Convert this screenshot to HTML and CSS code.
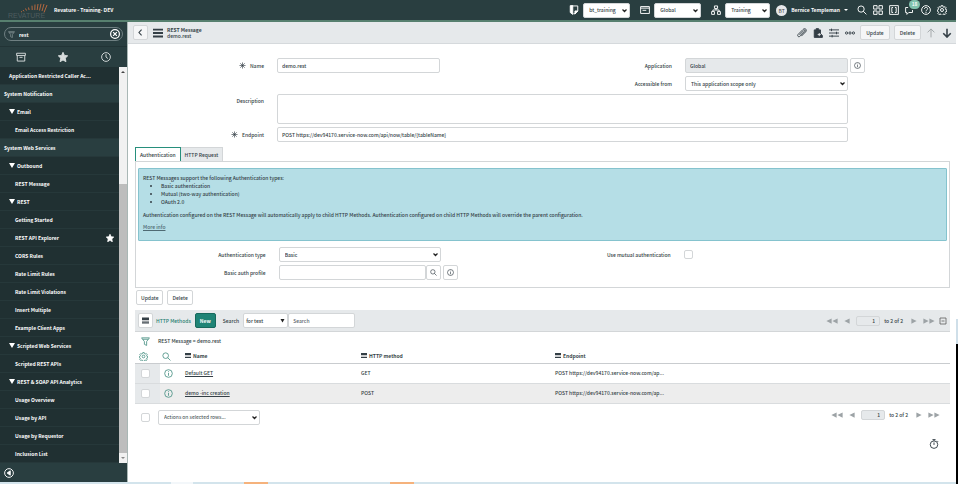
FILE: index.html
```
<!DOCTYPE html>
<html lang="en">
<head>
    <meta charset="UTF-8">
    <meta name="viewport" content="width=device-width, initial-scale=1.0">
    <title>demo.rest | REST Message</title>
    <link rel="stylesheet" href="styles.css">
</head>
<body>

    <!-- Icon set -->
    <svg class="sprite" aria-hidden="true">
        <symbol id="i-search" viewBox="0 0 16 16"><circle cx="6.5" cy="6.5" r="5"/><path d="M10 10l5 5"/></symbol>
        <symbol id="i-info" viewBox="0 0 16 16"><circle cx="8" cy="8" r="6.8"/><path d="M8 7v5M8 4v1.6"/></symbol>
        <symbol id="i-gear" viewBox="0 0 16 16"><circle cx="8" cy="8" r="2.4"/><path d="M6.700 1h2.600l.4 2 1.400.7 1.800-1.100 1.700 1.800-1.100 1.800.5 1.300 2 .5v2l-2 .5-.6 1.400 1.100 1.700-1.700 1.700-1.800-1-1.300.5-.4 2H6.700l-.4-2-1.400-.5-1.800 1-1.700-1.700 1.100-1.700L2 10.500l-1.500-.5V8l1.500-.5.6-1.300-1.100-1.800 1.700-1.800L5 3.700 6.300 3z"/></symbol>
        <symbol id="i-funnel" viewBox="0 0 16 16"><path d="M1 1.500h14L10 8v7l-4-2V8zM3 4h10"/></symbol>
        <symbol id="i-menu" viewBox="0 0 16 16"><path d="M0 2.500h16M0 8h16M0 13.500h16"/></symbol>
        <symbol id="i-column" viewBox="0 0 18 15"><path d="M0 0h18v6H0zM0 8h18v2H0zM0 12h18v3H0z"/></symbol>
        <symbol id="i-star" viewBox="0 0 16 16"><path d="M8 .5l2.300 5 5.200.6-3.900 3.700 1.100 5.700L8 12.700l-4.700 2.800 1.100-5.700L.5 6.100l5.200-.6z"/></symbol>
        <symbol id="i-prev" viewBox="0 0 16 16"><path d="M15 1v14L1 8z"/></symbol>
        <symbol id="i-next" viewBox="0 0 16 16"><path d="M1 1v14l14-7z"/></symbol>
        <symbol id="i-first" viewBox="0 0 32 16"><path d="M15 1v14L1 8zM31 1v14L17 8z"/></symbol>
        <symbol id="i-last" viewBox="0 0 32 16"><path d="M1 1v14l14-7zM17 1v14l14-7z"/></symbol>
    </svg>

    <div class="app">
        <header class="banner">
            <svg class="logo" viewBox="0 0 40 15" role="img" aria-label="Revature">
                <g class="rays">
                    <path d="M13 8.500l1 .5M15 7l1 1.300M17.500 5.500l1 2M20.500 4.500l.6 2.500M24 2.700l.2 4.300M27 1.500l-.2 5.500M30 1l-.8 6M33 .8l-1.500 6.700M36 1l-2 7M39 2l-3 7.500"/>
                </g>
                <text x="0" y="15">REVATURE</text>
            </svg>
            <span class="instance">Revature - Training- DEV</span>
            <div class="pickers">
                <label for="update-set"><svg class="icon" viewBox="0 0 16 16"><path d="M4 1.500h10v8L9.500 14H7"/><path class="solid" d="M2 1h4v14l-4-3zM9.500 9.500H14l-4.500 5z"/></svg></label>
                <select id="update-set"><option>bt_training</option></select>
                <label for="scope"><svg class="icon" viewBox="0 0 16 16"><path d="M1 2.500h14v11H1zM1 5h14M4 8.500h6"/></svg></label>
                <select id="scope"><option>Global</option></select>
                <label for="domain"><svg class="icon" viewBox="0 0 16 16"><path d="M5.500 1.500h5v4h-5zM1 10.500h4.500V15H1zM10.500 10.500H15V15h-4.500zM8 5.500V8M3 10.500V8h10v2.500"/></svg></label>
                <select id="domain"><option>Training</option></select>
            </div>
            <button class="user" type="button"><span class="avatar">BT</span>Bernice Templeman<span class="caret"></span></button>
            <div class="tools">
                <button type="button" aria-label="Search"><svg class="icon"><use href="#i-search"/></svg></button>
                <button type="button" aria-label="Apps"><svg class="icon" viewBox="0 0 16 16"><path d="M1 1h5.500v5.500H1zM9.500 1H15v5.500H9.500zM1 9.500h5.500V15H1zM9.500 9.500H15V15H9.500z"/></svg></button>
                <button type="button" aria-label="Studio"><svg class="icon" viewBox="0 0 16 16"><path d="M1 1h14v14H1zM6.500 4H4.500v8h2M9.500 4h2v8h-2"/></svg></button>
                <button class="chat" type="button" aria-label="Conversations"><svg class="icon" viewBox="0 0 16 16"><path d="M5 4H1v8h2v3l3-3h6V8"/></svg><span class="badge">18</span></button>
                <button type="button" aria-label="Help"><svg class="icon" viewBox="0 0 16 16"><circle cx="8" cy="8" r="7"/><path d="M5.500 6.200C5.500 3 10.500 3 10.500 6c0 1.800-2.500 2-2.500 4M8 11v2"/></svg></button>
                <button type="button" aria-label="Settings"><svg class="icon"><use href="#i-gear"/></svg></button>
            </div>
        </header>

        <div class="body">
            <aside class="sidebar">
                <div class="nav-filter">
                    <svg class="icon"><use href="#i-funnel"/></svg>
                    <input type="text" value="rest" aria-label="Filter navigator">
                    <button type="button" aria-label="Clear"><svg class="icon" viewBox="0 0 16 16"><circle cx="8" cy="8" r="7"/><path d="M5 5l6 6M11 5l-6 6"/></svg></button>
                </div>
                <div class="nav-tabs">
                    <button type="button" aria-label="All applications"><svg class="icon" viewBox="0 0 16 16"><path d="M1 2h14v3.500H1zM2 5.500v9h12v-9M5.500 8.500h5"/></svg></button>
                    <button type="button" aria-label="Favorites"><svg class="icon filled"><use href="#i-star"/></svg></button>
                    <button type="button" aria-label="History"><svg class="icon" viewBox="0 0 16 16"><circle cx="8" cy="8" r="7"/><path d="M8 3.500V8l3 2.500"/></svg></button>
                </div>
                <div class="nav-scroll">
                    <nav class="nav-list">
                        <a class="module top" href="#">Application Restricted Caller Ac...</a>
                        <a class="app-name" href="#">System Notification</a>
                        <a class="group" href="#">Email</a>
                        <a class="module" href="#">Email Access Restriction</a>
                        <a class="app-name" href="#">System Web Services</a>
                        <a class="group" href="#">Outbound</a>
                        <a class="module" href="#">REST Message</a>
                        <a class="group" href="#">REST</a>
                        <a class="module" href="#">Getting Started</a>
                        <a class="module" href="#">REST API Explorer<svg class="icon filled"><use href="#i-star"/></svg></a>
                        <a class="module" href="#">CORS Rules</a>
                        <a class="module" href="#">Rate Limit Rules</a>
                        <a class="module" href="#">Rate Limit Violations</a>
                        <a class="module" href="#">Insert Multiple</a>
                        <a class="module" href="#">Example Client Apps</a>
                        <a class="group" href="#">Scripted Web Services</a>
                        <a class="module" href="#">Scripted REST APIs</a>
                        <a class="group" href="#">REST &amp; SOAP API Analytics</a>
                        <a class="module" href="#">Usage Overview</a>
                        <a class="module" href="#">Usage by API</a>
                        <a class="module" href="#">Usage by Requestor</a>
                        <a class="module" href="#">Inclusion List</a>
                    </nav>
                    <div class="scrollbar"><span class="arrow up"></span><span class="thumb"></span><span class="arrow down"></span></div>
                </div>
                <div class="nav-footer">
                    <button type="button" aria-label="Collapse"><svg class="icon" viewBox="0 0 16 16"><circle cx="8" cy="8" r="7"/><path class="solid" d="M10 4.500v7L5 8z"/></svg></button>
                </div>
            </aside>

            <main class="main">
                <div class="form-header">
                    <button class="btn back" type="button" aria-label="Back"><svg class="icon" viewBox="0 0 16 16"><path d="M10.500 1.500L4.500 8l6 6.500"/></svg></button>
                    <button class="plain" type="button" aria-label="Menu"><svg class="icon menu"><use href="#i-menu"/></svg></button>
                    <h1>REST Message<span>demo.rest</span></h1>
                    <div class="form-actions">
                        <button class="plain" type="button" aria-label="Attachments"><svg class="icon" viewBox="0 0 16 16"><path d="M4 11l7-7c1.500-1.500 3 0 1.500 1.500L5 13c-2.500 2.500-5.500-.5-3-3l7.500-7.500c3.500-3.500 7.500.5 4 4L7 13"/></svg></button>
                        <button class="plain" type="button" aria-label="Add to update set"><svg class="icon" viewBox="0 0 16 16"><path class="solid" d="M2 3h3V1h4v2h3v6l3 3v3H2z"/><path class="cut" d="M10 8v5M7.500 10.500h5"/></svg></button>
                        <button class="plain" type="button" aria-label="Personalize form"><svg class="icon" viewBox="0 0 16 16"><path d="M0 3h16M0 8h16M0 13h16"/><path d="M4 1v4M12 6v4M5 11v4"/></svg></button>
                        <button class="plain" type="button" aria-label="More options"><svg class="icon" viewBox="0 0 16 16"><circle cx="2.500" cy="8" r="1.800"/><circle cx="8" cy="8" r="1.800"/><circle cx="13.500" cy="8" r="1.800"/></svg></button>
                        <button class="btn" type="button">Update</button>
                        <button class="btn" type="button">Delete</button>
                        <button class="plain arrow-up" type="button" aria-label="Previous record"><svg class="icon" viewBox="0 0 16 16"><path d="M8 15V1.500M2.500 7L8 1.500 13.500 7"/></svg></button>
                        <button class="plain" type="button" aria-label="Next record"><svg class="icon bold" viewBox="0 0 16 16"><path d="M8 1v13M2 8.500L8 14.500l6-6"/></svg></button>
                    </div>
                </div>

                <form class="record">
                    <label for="name"><svg class="req" viewBox="0 0 16 16"><path d="M8 1v14M1 8h14M3 3l10 10M13 3L3 13"/></svg>Name</label>
                    <input id="name" type="text" value="demo.rest">
                    <label for="application">Application</label>
                    <input id="application" type="text" value="Global" readonly>
                    <button class="btn square" type="button" aria-label="Application info"><svg class="icon"><use href="#i-info"/></svg></button>
                    <label class="right" for="access">Accessible from</label>
                    <select id="access"><option>This application scope only</option></select>
                    <label class="first" for="description">Description</label>
                    <textarea id="description" class="wide"></textarea>
                    <label class="first" for="endpoint"><svg class="req" viewBox="0 0 16 16"><path d="M8 1v14M1 8h14M3 3l10 10M13 3L3 13"/></svg>Endpoint</label>
                    <input id="endpoint" class="wide" type="text" value="POST https://dev94170.service-now.com/api/now/table/{tableName}">
                </form>

                <div class="tabs">
                    <button class="active" type="button">Authentication</button>
                    <button type="button">HTTP Request</button>
                </div>
                <section class="panel">
                    <div class="notice">
                        <p>REST Messages support the following Authentication types:</p>
                        <ul>
                            <li>Basic authentication</li>
                            <li>Mutual (two-way authentication)</li>
                            <li>OAuth 2.0</li>
                        </ul>
                        <p>Authentication configured on the REST Message will automatically apply to child HTTP Methods. Authentication configured on child HTTP Methods will override the parent configuration.</p>
                        <a href="#">More info</a>
                    </div>
                    <div class="auth">
                        <label for="auth-type">Authentication type</label>
                        <select id="auth-type"><option>Basic</option></select>
                        <label for="mutual">Use mutual authentication</label>
                        <input id="mutual" type="checkbox">
                        <label class="first" for="profile">Basic auth profile</label>
                        <div class="lookup">
                            <input id="profile" type="text">
                            <button class="btn square" type="button" aria-label="Lookup"><svg class="icon"><use href="#i-search"/></svg></button>
                        </div>
                        <button class="btn square" type="button" aria-label="Profile info"><svg class="icon"><use href="#i-info"/></svg></button>
                    </div>
                </section>

                <div class="form-buttons">
                    <button class="btn" type="button">Update</button>
                    <button class="btn" type="button">Delete</button>
                </div>

                <section class="list">
                    <div class="list-header">
                        <button class="btn square" type="button" aria-label="List menu"><svg class="icon column"><use href="#i-column"/></svg></button>
                        <a href="#">HTTP Methods</a>
                        <button class="btn new" type="button">New</button>
                        <label for="search-field">Search</label>
                        <div class="search">
                            <select id="search-field"><option>for text</option></select>
                            <input type="text" placeholder="Search" aria-label="Search text">
                        </div>
                        <div class="pager">
                            <svg class="icon double"><use href="#i-first"/></svg>
                            <svg class="icon"><use href="#i-prev"/></svg>
                            <input type="text" value="1" aria-label="First row">
                            <span>to 2 of 2</span>
                            <svg class="icon"><use href="#i-next"/></svg>
                            <svg class="icon double"><use href="#i-last"/></svg>
                            <svg class="icon collapse" viewBox="0 0 16 16"><path d="M2 2h12v12H2zM5 8h6"/></svg>
                        </div>
                    </div>
                    <div class="crumbs"><svg class="icon"><use href="#i-funnel"/></svg><span>REST Message = demo.rest</span></div>
                    <table>
                        <colgroup><col class="c-check"><col class="c-info"><col class="c-name"><col class="c-method"><col></colgroup>
                        <thead>
                            <tr>
                                <th><svg class="icon"><use href="#i-gear"/></svg></th>
                                <th><svg class="icon"><use href="#i-search"/></svg></th>
                                <th><svg class="icon column"><use href="#i-column"/></svg>Name</th>
                                <th><svg class="icon column"><use href="#i-column"/></svg>HTTP method</th>
                                <th><svg class="icon column"><use href="#i-column"/></svg>Endpoint</th>
                            </tr>
                        </thead>
                        <tbody>
                            <tr>
                                <td><input type="checkbox" aria-label="Select Default GET"></td>
                                <td><svg class="icon"><use href="#i-info"/></svg></td>
                                <td><a href="#">Default GET</a></td>
                                <td>GET</td>
                                <td>POST https://dev94170.service-now.com/ap...</td>
                            </tr>
                            <tr>
                                <td><input type="checkbox" aria-label="Select demo -inc creation"></td>
                                <td><svg class="icon"><use href="#i-info"/></svg></td>
                                <td><a href="#">demo -inc creation</a></td>
                                <td>POST</td>
                                <td>POST https://dev94170.service-now.com/ap...</td>
                            </tr>
                        </tbody>
                    </table>
                    <div class="list-footer">
                        <input type="checkbox" aria-label="Select all">
                        <select aria-label="Actions"><option>Actions on selected rows...</option></select>
                        <div class="pager">
                            <svg class="icon double"><use href="#i-first"/></svg>
                            <svg class="icon"><use href="#i-prev"/></svg>
                            <input type="text" value="1" aria-label="First row">
                            <span>to 2 of 2</span>
                            <svg class="icon"><use href="#i-next"/></svg>
                            <svg class="icon double"><use href="#i-last"/></svg>
                        </div>
                    </div>
                </section>
                <button class="plain timer" type="button" aria-label="Response time"><svg class="icon" viewBox="0 0 16 16"><circle cx="8" cy="9" r="6"/><path d="M5.500 1h5M8 1v2M13 3l1.500 1.500M8 5.500V9.500"/></svg></button>
            </main>
        </div>
        <div class="taskbar"><span class="light"></span><span class="task"></span><span class="task"></span></div>
    </div>
    <div class="edge"></div>

</body>
</html>
```

FILE: styles.css
```
* {
    box-sizing: border-box;
}

body {
    margin: 0;
    min-height: 100vh;
    display: flex;
    font: 500 5px/8px "Noto Sans CJK SC", "Noto Sans", sans-serif;
    color: #343f46;
    background: #fff;
}

button, input, select, textarea {
    font: inherit;
    color: inherit;
    margin: 0;
    padding: 0;
    border: 0;
    background: none;
}

svg {
    display: block;
    flex: none;
}

.sprite {
    position: absolute;
    width: 0;
    height: 0;
}

.icon, .req {
    width: 8px;
    height: 8px;
    fill: none;
    stroke: currentColor;
    stroke-width: 1.5;
}

.icon .solid, .icon.filled {
    fill: currentColor;
}

.icon .cut {
    stroke: #e6e8ea;
}

.icon.bold {
    stroke-width: 2.5;
}

.icon.menu {
    stroke-width: 3;
}

.icon.column {
    width: 6px;
    height: 5px;
    fill: currentColor;
    stroke: none;
}

select {
    appearance: none;
    height: 15px;
    padding: 0 10px 0 5px;
    border: 1px solid #d3d6d8;
    border-radius: 2px;
    background: #fff url("data:image/svg+xml,%3Csvg xmlns='http://www.w3.org/2000/svg' viewBox='0 0 10 10'%3E%3Cpath d='M1 3l4 4 4-4' fill='none' stroke='%23222' stroke-width='2.5'/%3E%3C/svg%3E") no-repeat right 2px center / 5px 5px;
}

input[type="text"], textarea {
    height: 15px;
    min-width: 0;
    padding: 0 4px;
    border: 1px solid #d3d6d8;
    border-radius: 2px;
    background: #fff;
}

input::placeholder {
    color: #5c666c;
}

input[type="checkbox"] {
    appearance: none;
    display: block;
    width: 9px;
    height: 9px;
    border: 1px solid #d3d6d8;
    border-radius: 2px;
    background: #fff;
}

.btn {
    display: flex;
    align-items: center;
    justify-content: center;
    height: 15px;
    padding: 0 4px;
    border: 1px solid #d3d6d8;
    border-radius: 2px;
    background: #fff;
}

.btn.square {
    width: 15px;
    padding: 0;
}

.btn .icon {
    width: 7px;
    height: 7px;
}

.app {
    flex: 1;
    min-width: 0;
    display: flex;
    flex-direction: column;
}

.edge {
    width: 2px;
    background: linear-gradient(#fff 66%, #cfdfe9 66%, #cfdfe9 71%, #000 71%);
}

/* Banner */
.banner {
    display: flex;
    align-items: center;
    height: 22px;
    padding: 0 9px 0 8px;
    border-bottom: 2px solid #57806f;
    color: #fff;
    background: #293e40;
}

.logo {
    width: 40px;
    height: 15px;
    margin-right: 6px;
}

.logo .rays {
    fill: none;
    stroke: #b5683f;
    stroke-width: 1;
}

.logo text {
    font: 7px "Liberation Sans", Arial, sans-serif;
    fill: #4d5c5f;
}

.instance {
    flex: 1;
    font-weight: bold;
}

.pickers, .tools {
    display: flex;
    align-items: center;
}

.pickers .icon {
    width: 10px;
    height: 10px;
}

.pickers select {
    width: 47px;
    margin: 0 10px 0 4px;
    color: #343f46;
}

.pickers select:last-child {
    width: 45px;
    margin-right: 6px;
}

.user {
    display: flex;
    align-items: center;
    gap: 4px;
    margin-right: 9px;
    font-weight: bold;
}

.avatar {
    width: 11px;
    height: 11px;
    border-radius: 50%;
    font-weight: normal;
    line-height: 11px;
    color: #444;
    background: #e6e8ea;
}

.caret {
    border: 2px solid transparent;
    border-top-color: #fff;
    border-bottom: 0;
}

.tools {
    gap: 6px;
}

.tools .icon {
    width: 10px;
    height: 10px;
}

.chat {
    position: relative;
}

.badge {
    position: absolute;
    top: -5px;
    left: 4px;
    width: 11px;
    height: 9px;
    border-radius: 5px;
    background: #81c3ae;
}

.body {
    flex: 1;
    display: flex;
}

/* Navigator */
.sidebar {
    flex: none;
    width: 128px;
    border-right: 1px solid #a9b7b5;
    color: #fff;
    background: #293e40;
}

.nav-filter {
    display: flex;
    align-items: center;
    height: 14px;
    margin: 5px 4px;
    padding: 0 2px 0 3px;
    border: 1px solid #6f8082;
    border-radius: 7px;
    background: #2b3f42;
}

.nav-filter .icon {
    width: 7px;
    height: 7px;
    color: #8c9b9d;
}

.nav-filter input[type="text"] {
    flex: 1;
    height: 12px;
    border: 0;
    font-weight: bold;
    background: none;
}

.nav-filter button .icon, .nav-tabs .icon, .nav-footer .icon {
    width: 10px;
    height: 10px;
}

.nav-filter button .icon {
    stroke-width: 2;
    color: #fff;
}

.nav-tabs {
    display: grid;
    grid-template-columns: repeat(3, 1fr);
    justify-items: center;
    align-items: center;
    height: 21px;
    border-top: 1px solid #223436;
    color: #d8dddd;
}

.nav-scroll {
    display: flex;
}

.nav-list {
    flex: 1;
    font-weight: bold;
    background: #203032;
}

.nav-list a {
    display: flex;
    align-items: center;
    justify-content: space-between;
    height: 18px;
    padding: 0 5px 0 15px;
    border-bottom: 1px solid #26383a;
    color: #fff;
    text-decoration: none;
}

.nav-list .top {
    padding-left: 9px;
}

.nav-list .app-name {
    padding-left: 4px;
    background: #293e40;
}

.nav-list .group {
    justify-content: flex-start;
    gap: 2px;
    padding-left: 9px;
}

.nav-list .group::before {
    content: "";
    border: 3px solid transparent;
    border-top: 5px solid #fff;
    border-bottom: 0;
}

.scrollbar {
    display: flex;
    flex-direction: column;
    width: 8px;
    background: #f1f1f1;
}

.scrollbar .arrow {
    align-self: center;
    margin: 4px 0;
    border: 2px solid transparent;
}

.scrollbar .up {
    border-top: 0;
    border-bottom-color: #444;
}

.scrollbar .down {
    border-bottom: 0;
    border-top-color: #888;
}

.scrollbar .thumb {
    height: 68%;
    margin-top: auto;
    background: #bdbdbd;
}

.nav-footer {
    display: flex;
    align-items: center;
    height: 19px;
    padding-left: 4px;
}

/* Record header */
.main {
    flex: 1;
    min-width: 0;
}

.form-header {
    display: flex;
    align-items: center;
    height: 22px;
    padding: 0 3px 0 5px;
    border-bottom: 1px solid #d5d9dc;
    background: #e6e9eb;
}

.form-header .btn {
    background: #f5f6f7;
}

.form-header .back {
    width: 15px;
    padding: 0;
}

.back .icon {
    stroke-width: 2.5;
}

.plain .icon {
    width: 10px;
    height: 10px;
}

.form-header h1 {
    flex: 1;
    margin: 0 0 0 4px;
    font-size: 5px;
    line-height: 6px;
}

.back + .plain {
    margin-left: 5px;
}

.form-header h1 span {
    display: block;
    font-weight: 500;
}

.form-actions {
    display: flex;
    align-items: center;
    gap: 4px;
}

.form-actions .plain {
    padding: 0 1px;
}

.form-actions .btn {
    padding: 0 5px;
}

.form-actions .arrow-up {
    color: #a0a5a8;
}

/* Record fields */
.record {
    display: grid;
    grid-template-columns: 149fr 163fr 245fr 163fr 108fr;
    row-gap: 3px;
    align-items: center;
    padding-top: 14px;
}

.record label, .auth label {
    display: flex;
    align-items: center;
    justify-content: flex-end;
    gap: 4px;
    padding-right: 13px;
}

.record .square {
    margin-left: 2px;
}

.record .right {
    grid-column: 3;
}

.first {
    grid-column: 1;
}

.record .wide {
    grid-column: 2 / 5;
}

.record label[for="description"] {
    align-self: start;
    padding-top: 3px;
}

.record textarea {
    height: 30px;
    resize: none;
}

#application {
    background: #e6e9eb;
}

.req {
    width: 7px;
    height: 7px;
}

/* Tabs */
.tabs {
    display: flex;
    margin: 5px 5px 0 7px;
}

.tabs button {
    height: 14px;
    padding: 0 4px;
    border: 1px solid #d3d6d8;
    border-width: 1px 1px 0 0;
    background: #e6e9eb;
}

.tabs .active {
    border-color: #278f7c;
    border-left-width: 1px;
    background: #fff;
}

.panel {
    margin: 0 6px 0 7px;
    padding: 6px 2px 7px;
    border: 1px solid #d3d6d8;
}

.notice {
    height: 73px;
    padding: 5px 4px;
    border: 1px solid #85c3ce;
    border-radius: 1px;
    background: #b5dee6;
}

.notice p {
    margin: 0;
}

.notice ul {
    margin: 0 0 5px;
    padding-left: 18px;
}

.notice a {
    display: block;
    margin-top: 4px;
    color: #4f6a73;
}

.auth {
    display: grid;
    grid-template-columns: 141fr 163fr 243fr 264fr;
    row-gap: 3px;
    align-items: center;
    padding-top: 6px;
}

.lookup {
    display: flex;
}

.lookup input[type="text"] {
    flex: 1;
}

.auth > .square {
    margin-left: 2px;
}

.form-buttons {
    display: flex;
    gap: 4px;
    margin: 2px 8px 5px;
}

/* Related list */
.list {
    margin: 0 6px 0 7px;
}

.list-header {
    display: flex;
    align-items: center;
    height: 22px;
    padding: 0 3px;
    border-bottom: 1px solid #d3d6d8;
    background: #e6e9eb;
}

.list-header a {
    margin: 0 4px 0 3px;
    color: #278072;
    text-decoration: none;
}

.list-header .new {
    border-color: #17695d;
    font-weight: bold;
    color: #fff;
    background: #1f8476;
}

.list-header label {
    margin: 0 4px 0 7px;
}

.search {
    display: flex;
}

.search select {
    width: 45px;
    padding-left: 2px;
    background-image: url("data:image/svg+xml,%3Csvg xmlns='http://www.w3.org/2000/svg' viewBox='0 0 10 10'%3E%3Cpath d='M1 2h8L5 9z' fill='%23222'/%3E%3C/svg%3E");
}

.search input[type="text"] {
    width: 67px;
}

.pager {
    display: flex;
    align-items: center;
    gap: 6px;
    margin-left: auto;
    color: #9da3a6;
}

.pager .icon {
    width: 6px;
    height: 6px;
    fill: currentColor;
    stroke: none;
}

.pager .double {
    width: 12px;
}

.pager .collapse {
    width: 8px;
    height: 8px;
    margin-left: -2px;
    fill: none;
    stroke: #555;
}

.pager input[type="text"] {
    width: 24px;
    height: 10px;
    color: #343f46;
    text-align: right;
    background: #e6e9eb;
}

.pager span {
    margin: 0 2px 0 -2px;
    color: #343f46;
}

.crumbs {
    display: flex;
    align-items: center;
    gap: 8px;
    height: 18px;
    padding-left: 6px;
}

.crumbs .icon, th .icon, td .icon {
    width: 9px;
    height: 9px;
    color: #4b9285;
}

table {
    width: 100%;
    table-layout: fixed;
    border-collapse: collapse;
}

.c-check, .c-info {
    width: 25px;
}

.c-name {
    width: 176px;
}

.c-method {
    width: 194px;
}

th, td {
    padding: 0;
    text-align: left;
}

th {
    height: 13px;
    border-bottom: 1px solid #c9cccf;
}

th:first-child, td:nth-child(2) {
    padding-left: 4px;
}

th:nth-child(2) {
    padding-left: 2px;
}

th .icon.column {
    display: inline-block;
    width: 6px;
    height: 5px;
    margin-right: 2px;
    color: #343f46;
}

td {
    height: 20px;
    border-bottom: 1px solid #d9dcde;
}

td:first-child {
    padding-left: 6px;
    background: #e6e9eb;
}

td a {
    color: #343f46;
}

tr:nth-child(2) td:not(:first-child) {
    background: #ededed;
}

.list-footer {
    display: flex;
    align-items: center;
    gap: 8px;
    padding: 6px 10px 0 6px;
}

.list-footer select {
    width: 102px;
    font-weight: normal;
}

.list-footer .pager {
    align-self: flex-start;
}

.timer {
    display: block;
    margin: 14px 17px 0 auto;
}

/* Strip under the page */
.taskbar {
    display: flex;
    height: 2px;
    background: #d3e4ec;
}

.taskbar .light {
    width: 22px;
    margin-left: 171px;
    background: #f3f7fa;
}

.taskbar .task {
    width: 24px;
    margin-left: 51px;
    background: #f5b27c;
}

.taskbar .task + .task {
    margin-left: 122px;
}
```
